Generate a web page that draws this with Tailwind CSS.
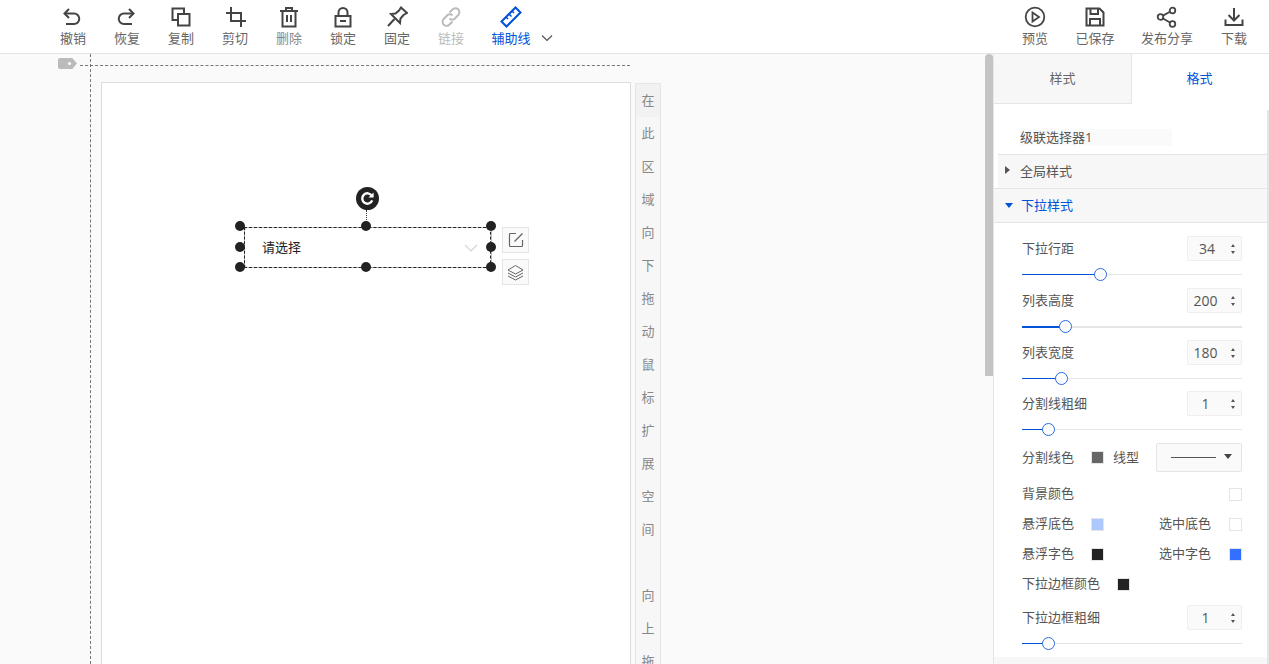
<!DOCTYPE html>
<html lang="zh">
<head>
<meta charset="utf-8">
<script src="https://cdn.jsdelivr.net/npm/@tailwindcss/browser@4"></script>
</head>
<body class="m-0 overflow-hidden bg-white font-['Open_Sans','Noto_Sans_CJK_SC',sans-serif] text-[13px] text-[#666]">
<div class="w-[1269px] h-[664px] flex flex-col overflow-hidden">
  <header class="h-[54px] shrink-0 border-b border-[#e5e5e5] flex justify-between pl-[46px] pr-[10px] bg-white">
    <div class="flex">
      <div class="w-[54px] flex flex-col items-center pt-[6px]">
        <svg class="w-[22px] h-[22px] ml-[-2px]" viewBox="0 0 22 22" fill="none" stroke="#444" stroke-width="2"><path d="M8 3 L3.5 7.5 L8 12"/><path d="M4 7.5 H13 a5.2 5.2 0 0 1 0 10.5 H5"/></svg>
        <span class="leading-[18px] mt-[1px]">撤销</span>
      </div>
      <div class="w-[54px] flex flex-col items-center pt-[6px]">
        <svg class="w-[22px] h-[22px] ml-[-2px]" viewBox="0 0 22 22" fill="none" stroke="#444" stroke-width="2"><path d="M14 3 L18.5 7.5 L14 12"/><path d="M18 7.5 H9 a5.2 5.2 0 0 0 0 10.5 H17"/></svg>
        <span class="leading-[18px] mt-[1px]">恢复</span>
      </div>
      <div class="w-[54px] flex flex-col items-center pt-[6px]">
        <svg class="w-[22px] h-[22px]" viewBox="0 0 22 22" fill="none" stroke="#444" stroke-width="2"><path d="M8 14 H2.5 V2.5 H14 V8"/><rect x="8" y="8" width="11.5" height="11.5"/></svg>
        <span class="leading-[18px] mt-[1px]">复制</span>
      </div>
      <div class="w-[54px] flex flex-col items-center pt-[6px]">
        <svg class="w-[22px] h-[22px]" viewBox="0 0 22 22" fill="none" stroke="#444" stroke-width="2"><path d="M7 1 V15 H22"/><path d="M2 7 H17 V21"/></svg>
        <span class="leading-[18px] mt-[1px]">剪切</span>
      </div>
      <div class="w-[54px] flex flex-col items-center pt-[6px]">
        <svg class="w-[22px] h-[22px]" viewBox="0 0 22 22" fill="none" stroke="#444" stroke-width="2"><path d="M2 5 H20"/><path d="M8 5 V2 H14 V5"/><path d="M4.5 5 V20.5 H17.5 V5"/><path d="M9 9 V16 M13 9 V16"/></svg>
        <span class="leading-[18px] mt-[1px] text-[#888]">删除</span>
      </div>
      <div class="w-[54px] flex flex-col items-center pt-[6px]">
        <svg class="w-[22px] h-[22px]" viewBox="0 0 22 22" fill="none" stroke="#444" stroke-width="2"><rect x="3.5" y="10" width="15" height="10.5"/><path d="M6.5 10 V6.5 a4.5 4.5 0 0 1 9 0 V10"/><path d="M8 15 H14"/></svg>
        <span class="leading-[18px] mt-[1px]">锁定</span>
      </div>
      <div class="w-[54px] flex flex-col items-center pt-[6px]">
        <svg class="w-[22px] h-[22px]" viewBox="0 0 22 22" fill="none" stroke="#444" stroke-width="2"><path d="M15 1.5 L21 7 L17.5 9 L14.5 12.5 L14 17 L5 8 L9.5 7.5 L13 4.5 Z"/><path d="M8.5 13 L2 20"/></svg>
        <span class="leading-[18px] mt-[1px]">固定</span>
      </div>
      <div class="w-[54px] flex flex-col items-center pt-[6px]">
        <svg class="w-[22px] h-[22px]" viewBox="0 0 22 22" fill="none" stroke="#bbb" stroke-width="2"><path d="M9.5 6.5 L12.5 3.5 a3.9 3.9 0 0 1 5.8 5.5 L15 12.5 a3.9 3.9 0 0 1 -5.5 0"/><path d="M12.5 15.5 L9.5 18.5 a3.9 3.9 0 0 1 -5.8 -5.5 L7 9.5 a3.9 3.9 0 0 1 5.5 0"/></svg>
        <span class="leading-[18px] mt-[1px] text-[#bbb]">链接</span>
      </div>
      <div class="w-[66px] flex flex-col items-center pt-[6px]">
        <svg class="w-[22px] h-[22px]" viewBox="0 0 22 22" fill="none" stroke="#0052d9" stroke-width="2"><path d="M15.5 1.5 L20.5 6.5 L6.5 20.5 L1.5 15.5 Z"/><path d="M6 11 L8 13 M9 8 L11.5 10.5 M12 5 L14 7" stroke-width="1.5"/></svg>
        <span class="leading-[18px] mt-[1px] text-[#0052d9]">辅助线</span>
      </div>
      <div class="flex items-center h-[53px] pt-[22px] ml-[-3px]">
        <svg class="w-[12px] h-[8px]" viewBox="0 0 12 8" fill="none" stroke="#555" stroke-width="1.2"><path d="M1 1.5 L6 6.5 L11 1.5"/></svg>
      </div>
    </div>
    <div class="flex">
      <div class="w-[60px] flex flex-col items-center pt-[6px]">
        <svg class="w-[22px] h-[22px]" viewBox="0 0 22 22" fill="none" stroke="#444" stroke-width="1.8"><circle cx="11" cy="11" r="9.3"/><path d="M8.5 6.5 L15 11 L8.5 15.5 Z"/></svg>
        <span class="leading-[18px] mt-[1px]">预览</span>
      </div>
      <div class="w-[60px] flex flex-col items-center pt-[6px]">
        <svg class="w-[22px] h-[22px]" viewBox="0 0 22 22" fill="none" stroke="#444" stroke-width="2"><path d="M2.5 2.5 H15.5 L19.5 6.5 V19.5 H2.5 Z"/><path d="M6.5 2.5 V8 H14 V2.5"/><path d="M6 19.5 V13 H16 V19.5"/></svg>
        <span class="leading-[18px] mt-[1px]">已保存</span>
      </div>
      <div class="w-[84px] flex flex-col items-center pt-[6px]">
        <svg class="w-[22px] h-[22px]" viewBox="0 0 22 22" fill="none" stroke="#444" stroke-width="1.8"><circle cx="16.5" cy="4.5" r="2.8"/><circle cx="4.5" cy="11" r="2.8"/><circle cx="16.5" cy="18" r="2.8"/><path d="M7 9.6 L14 5.8 M7 12.4 L14 16.6"/></svg>
        <span class="leading-[18px] mt-[1px]">发布分享</span>
      </div>
      <div class="w-[50px] flex flex-col items-center pt-[6px]">
        <svg class="w-[22px] h-[22px]" viewBox="0 0 22 22" fill="none" stroke="#444" stroke-width="2"><path d="M11 2 V14"/><path d="M5.5 9 L11 14.5 L16.5 9"/><path d="M2.5 13.5 V19 H19.5 V13.5"/></svg>
        <span class="leading-[18px] mt-[1px]">下载</span>
      </div>
    </div>
  </header>

  <div class="flex flex-1 min-h-0">
    <main class="relative w-[985px] shrink-0 bg-[#fafafa] overflow-hidden">
      <div class="absolute left-[58px] top-[4px] w-[19px] h-[11px] bg-[#bbb] rounded-l-[2px] [clip-path:polygon(0_0,75%_0,100%_50%,75%_100%,0_100%)]">
        <div class="absolute left-[10px] top-[4px] w-[3px] h-[3px] rounded-full bg-white"></div>
      </div>
      <div class="absolute left-[80px] top-[11px] w-[550px] border-t border-dashed border-[#777]"></div>
      <div class="absolute left-[90px] top-0 h-[610px] border-l border-dashed border-[#777]"></div>

      <div class="absolute left-[101px] top-[28px] w-[530px] h-[600px] bg-white border border-[#ddd]"></div>

      <div class="absolute left-[635px] top-[29px] w-[26px] h-[590px] bg-[#f7f7f7] border-x border-t border-[#e5e5e5] flex flex-col items-center text-[#888]">
        <span class="h-[33px] w-full bg-[#f2f2f2] flex items-center justify-center shrink-0 pt-[1px]">在</span>
        <span class="h-[33px] flex items-center shrink-0 pt-[1px]">此</span>
        <span class="h-[33px] flex items-center shrink-0 pt-[1px]">区</span>
        <span class="h-[33px] flex items-center shrink-0 pt-[1px]">域</span>
        <span class="h-[33px] flex items-center shrink-0 pt-[1px]">向</span>
        <span class="h-[33px] flex items-center shrink-0 pt-[1px]">下</span>
        <span class="h-[33px] flex items-center shrink-0 pt-[1px]">拖</span>
        <span class="h-[33px] flex items-center shrink-0 pt-[1px]">动</span>
        <span class="h-[33px] flex items-center shrink-0 pt-[1px]">鼠</span>
        <span class="h-[33px] flex items-center shrink-0 pt-[1px]">标</span>
        <span class="h-[33px] flex items-center shrink-0 pt-[1px]">扩</span>
        <span class="h-[33px] flex items-center shrink-0 pt-[1px]">展</span>
        <span class="h-[33px] flex items-center shrink-0 pt-[1px]">空</span>
        <span class="h-[33px] flex items-center shrink-0 pt-[1px]">间</span>
        <span class="h-[33px] shrink-0"></span>
        <span class="h-[33px] flex items-center shrink-0 pt-[1px]">向</span>
        <span class="h-[33px] flex items-center shrink-0 pt-[1px]">上</span>
        <span class="h-[33px] flex items-center shrink-0 pt-[1px]">拖</span>
      </div>

      <!-- selected widget -->
      <div class="absolute left-[244px] top-[173px] w-[248px] h-[41px] rounded-[4px] border border-[#bbb]"></div>
      <div class="absolute left-[244px] top-[173px] w-[247px] h-[41px] border border-dashed border-[#222] flex items-center justify-between pl-[17px] pr-[12px] text-[#222]">
        <span>请选择</span>
        <svg class="w-[14px] h-[8px]" viewBox="0 0 14 8" fill="none" stroke="#d5d5d5" stroke-width="1.2"><path d="M1 1 L7 7 L13 1"/></svg>
      </div>
      <div class="absolute left-[356px] top-[133px] w-[23px] h-[23px] rounded-full bg-[#222] flex items-center justify-center">
        <svg class="w-[15px] h-[15px]" viewBox="0 0 16 16" fill="none" stroke="#fff" stroke-width="2.6"><path d="M12.5 5 A5.5 5.5 0 1 0 13 10"/><path d="M14.5 1.5 V7 H9 Z" fill="#fff" stroke="none"/></svg>
      </div>
      <div class="absolute left-[366px] top-[156px] h-[16px] border-l border-dotted border-[#333]"></div>
      <div class="absolute left-[235px] top-[167px] w-[10px] h-[10px] rounded-full bg-[#222]"></div>
      <div class="absolute left-[361px] top-[167px] w-[10px] h-[10px] rounded-full bg-[#222]"></div>
      <div class="absolute left-[486px] top-[167px] w-[10px] h-[10px] rounded-full bg-[#222]"></div>
      <div class="absolute left-[235px] top-[188px] w-[10px] h-[10px] rounded-full bg-[#222]"></div>
      <div class="absolute left-[486px] top-[188px] w-[10px] h-[10px] rounded-full bg-[#222]"></div>
      <div class="absolute left-[235px] top-[208px] w-[10px] h-[10px] rounded-full bg-[#222]"></div>
      <div class="absolute left-[361px] top-[208px] w-[10px] h-[10px] rounded-full bg-[#222]"></div>
      <div class="absolute left-[486px] top-[208px] w-[10px] h-[10px] rounded-full bg-[#222]"></div>
      <div class="absolute left-[502px] top-[173px] w-[27px] h-[26px] bg-[#fafafa] border border-[#e5e5e5] flex items-center justify-center">
        <svg class="w-[16px] h-[16px]" viewBox="0 0 16 16" fill="none" stroke="#666" stroke-width="1.2"><path d="M8 1.5 H2.5 a1 1 0 0 0 -1 1 V13.5 a1 1 0 0 0 1 1 H13.5 a1 1 0 0 0 1 -1 V8"/><path d="M6.5 9.5 L14.5 1.5"/></svg>
      </div>
      <div class="absolute left-[502px] top-[205px] w-[27px] h-[26px] bg-[#fafafa] border border-[#e5e5e5] flex items-center justify-center">
        <svg class="w-[17px] h-[17px]" viewBox="0 0 17 17" fill="none" stroke="#666" stroke-width="1"><path d="M8.5 1.5 L16 6 L8.5 10 L1 6 Z"/><path d="M1 9 L8.5 13 L16 9"/><path d="M1 12 L8.5 16 L16 12"/></svg>
      </div>
    </main>

    <div class="w-[8px] shrink-0 bg-[#fafafa]"><div class="h-[322px] bg-[#c4c4c4] rounded-t-[4px]"></div></div>

    <aside class="w-[276px] shrink-0 bg-white border-l border-[#e5e5e5] relative overflow-hidden">
      <div class="flex h-[50px]">
        <div class="w-[138px] bg-[#f7f7f7] border-r border-b border-[#e5e5e5] flex items-center justify-center">样式</div>
        <div class="flex-1 flex items-center justify-center pr-[2px] text-[#0052d9]">格式</div>
      </div>
      <div class="h-[50px] pl-[26px] pt-[25px]">
        <div class="w-[152px] h-[17px] bg-[#fafafa] leading-[17px] text-[#555]">级联选择器1</div>
      </div>
      <div class="ml-[4px] h-[34px] border-t border-[#e5e5e5] bg-[#f7f7f7] flex items-center pl-[7px] text-[#555]">
        <svg class="w-[5px] h-[8px] mb-[4px] mr-[10px]" viewBox="0 0 5 8"><path d="M0 0 L5 4 L0 8 Z" fill="#555"/></svg>全局样式
      </div>
      <div class="h-[34px] border-t border-[#e5e5e5] bg-[#f7f7f7] flex items-center pl-[11px] text-[#0052d9]">
        <svg class="w-[8px] h-[5px] mb-[1px] mr-[8px]" viewBox="0 0 8 5"><path d="M0 0 H8 L4 5 Z" fill="#0052d9"/></svg>下拉样式
      </div>
      <div class="border-t border-[#e5e5e5] pl-[28px] pr-[27px] h-[435px] pt-[13px] text-[#555]">

        <div class="flex justify-between items-center h-[25px]">
          <span>下拉行距</span>
          <div class="w-[55px] h-[25px] bg-[#fafafa] border border-[#eee] rounded-[2px] flex items-center justify-between pl-[9px] pr-[6px] text-[14px]"><span class="w-[20px] text-center">34</span><div class="flex flex-col gap-[4px]"><i class="block w-0 h-0 border-x-[2px] border-b-[3px] border-x-transparent border-b-[#555]"></i><i class="block w-0 h-0 border-x-[2px] border-t-[3px] border-x-transparent border-t-[#555]"></i></div></div>
        </div>
        <div class="relative h-[1px] bg-[#e5e5e5] mt-[13px]"><div class="h-full w-[78px] bg-[#0052d9]"></div><div class="absolute left-[72px] top-[-6px] w-[13px] h-[13px] rounded-full bg-white border-[1.5px] border-[#2a6ae0]"></div></div>

        <div class="flex justify-between items-center h-[25px] mt-[13px]">
          <span>列表高度</span>
          <div class="w-[55px] h-[25px] bg-[#fafafa] border border-[#eee] rounded-[2px] flex items-center justify-between pl-[4px] pr-[6px] text-[14px]"><span class="w-[27px] text-center">200</span><div class="flex flex-col gap-[4px]"><i class="block w-0 h-0 border-x-[2px] border-b-[3px] border-x-transparent border-b-[#555]"></i><i class="block w-0 h-0 border-x-[2px] border-t-[3px] border-x-transparent border-t-[#555]"></i></div></div>
        </div>
        <div class="relative h-[2px] bg-[#e5e5e5] mt-[13px]"><div class="h-full w-[44px] bg-[#0052d9]"></div><div class="absolute left-[37px] top-[-6px] w-[13px] h-[13px] rounded-full bg-white border-[1.5px] border-[#2a6ae0]"></div></div>

        <div class="flex justify-between items-center h-[25px] mt-[12px]">
          <span>列表宽度</span>
          <div class="w-[55px] h-[25px] bg-[#fafafa] border border-[#eee] rounded-[2px] flex items-center justify-between pl-[4px] pr-[6px] text-[14px]"><span class="w-[27px] text-center">180</span><div class="flex flex-col gap-[4px]"><i class="block w-0 h-0 border-x-[2px] border-b-[3px] border-x-transparent border-b-[#555]"></i><i class="block w-0 h-0 border-x-[2px] border-t-[3px] border-x-transparent border-t-[#555]"></i></div></div>
        </div>
        <div class="relative h-[1px] bg-[#e5e5e5] mt-[13px]"><div class="h-full w-[40px] bg-[#0052d9]"></div><div class="absolute left-[33px] top-[-6px] w-[13px] h-[13px] rounded-full bg-white border-[1.5px] border-[#2a6ae0]"></div></div>

        <div class="flex justify-between items-center h-[25px] mt-[12px]">
          <span>分割线粗细</span>
          <div class="w-[55px] h-[25px] bg-[#fafafa] border border-[#eee] rounded-[2px] flex items-center justify-between pl-[9px] pr-[6px] text-[14px]"><span class="w-[17px] text-center">1</span><div class="flex flex-col gap-[4px]"><i class="block w-0 h-0 border-x-[2px] border-b-[3px] border-x-transparent border-b-[#555]"></i><i class="block w-0 h-0 border-x-[2px] border-t-[3px] border-x-transparent border-t-[#555]"></i></div></div>
        </div>
        <div class="relative h-[1px] bg-[#e5e5e5] mt-[13px]"><div class="h-full w-[27px] bg-[#0052d9]"></div><div class="absolute left-[20px] top-[-6px] w-[13px] h-[13px] rounded-full bg-white border-[1.5px] border-[#2a6ae0]"></div></div>

        <div class="flex items-center h-[29px] mt-[13px]">
          <span class="w-[69px]">分割线色</span>
          <i class="block w-[13px] h-[13px] bg-[#666] border border-[#e5e5e5]"></i>
          <span class="ml-[9px] w-[43px]">线型</span>
          <div class="w-[86px] h-[29px] bg-[#fafafa] border border-[#e5e5e5] rounded-[2px] flex items-center pl-[14px] gap-[8px]"><i class="block w-[45px] h-px bg-[#555]"></i><i class="block w-0 h-0 border-x-[4px] border-t-[5px] border-x-transparent border-t-[#444] mb-[2px]"></i></div>
        </div>

        <div class="flex items-center justify-between h-[18px] mt-[13px]">
          <span>背景颜色</span>
          <i class="block w-[13px] h-[13px] bg-white border border-[#e5e5e5]"></i>
        </div>

        <div class="flex items-center h-[18px] mt-[12px]">
          <span class="w-[69px]">悬浮底色</span>
          <i class="block w-[13px] h-[13px] bg-[#adc8ff] border border-[#e5e5e5]"></i>
          <span class="ml-[55px] flex-1">选中底色</span>
          <i class="block w-[13px] h-[13px] bg-white border border-[#e5e5e5]"></i>
        </div>

        <div class="flex items-center h-[18px] mt-[12px]">
          <span class="w-[69px]">悬浮字色</span>
          <i class="block w-[13px] h-[13px] bg-[#222] border border-[#e5e5e5]"></i>
          <span class="ml-[55px] flex-1">选中字色</span>
          <i class="block w-[13px] h-[13px] bg-[#3370ff] border border-[#e5e5e5]"></i>
        </div>

        <div class="flex items-center h-[18px] mt-[12px]">
          <span class="w-[95px]">下拉边框颜色</span>
          <i class="block w-[13px] h-[13px] bg-[#222] border border-[#e5e5e5]"></i>
        </div>

        <div class="flex justify-between items-center h-[25px] mt-[12px]">
          <span>下拉边框粗细</span>
          <div class="w-[55px] h-[25px] bg-[#fafafa] border border-[#eee] rounded-[2px] flex items-center justify-between pl-[9px] pr-[6px] text-[14px]"><span class="w-[17px] text-center">1</span><div class="flex flex-col gap-[4px]"><i class="block w-0 h-0 border-x-[2px] border-b-[3px] border-x-transparent border-b-[#555]"></i><i class="block w-0 h-0 border-x-[2px] border-t-[3px] border-x-transparent border-t-[#555]"></i></div></div>
        </div>
        <div class="relative h-[1px] bg-[#e5e5e5] mt-[13px]"><div class="h-full w-[27px] bg-[#0052d9]"></div><div class="absolute left-[20px] top-[-6px] w-[13px] h-[13px] rounded-full bg-white border-[1.5px] border-[#2a6ae0]"></div></div>
      </div>
      <div class="h-[10px] bg-[#f7f7f7]"></div>
      <div class="absolute right-0 top-[56px] bottom-0 w-[2px] bg-[#e5e5e5]"></div>
    </aside>
  </div>
</div>
</body>
</html>
